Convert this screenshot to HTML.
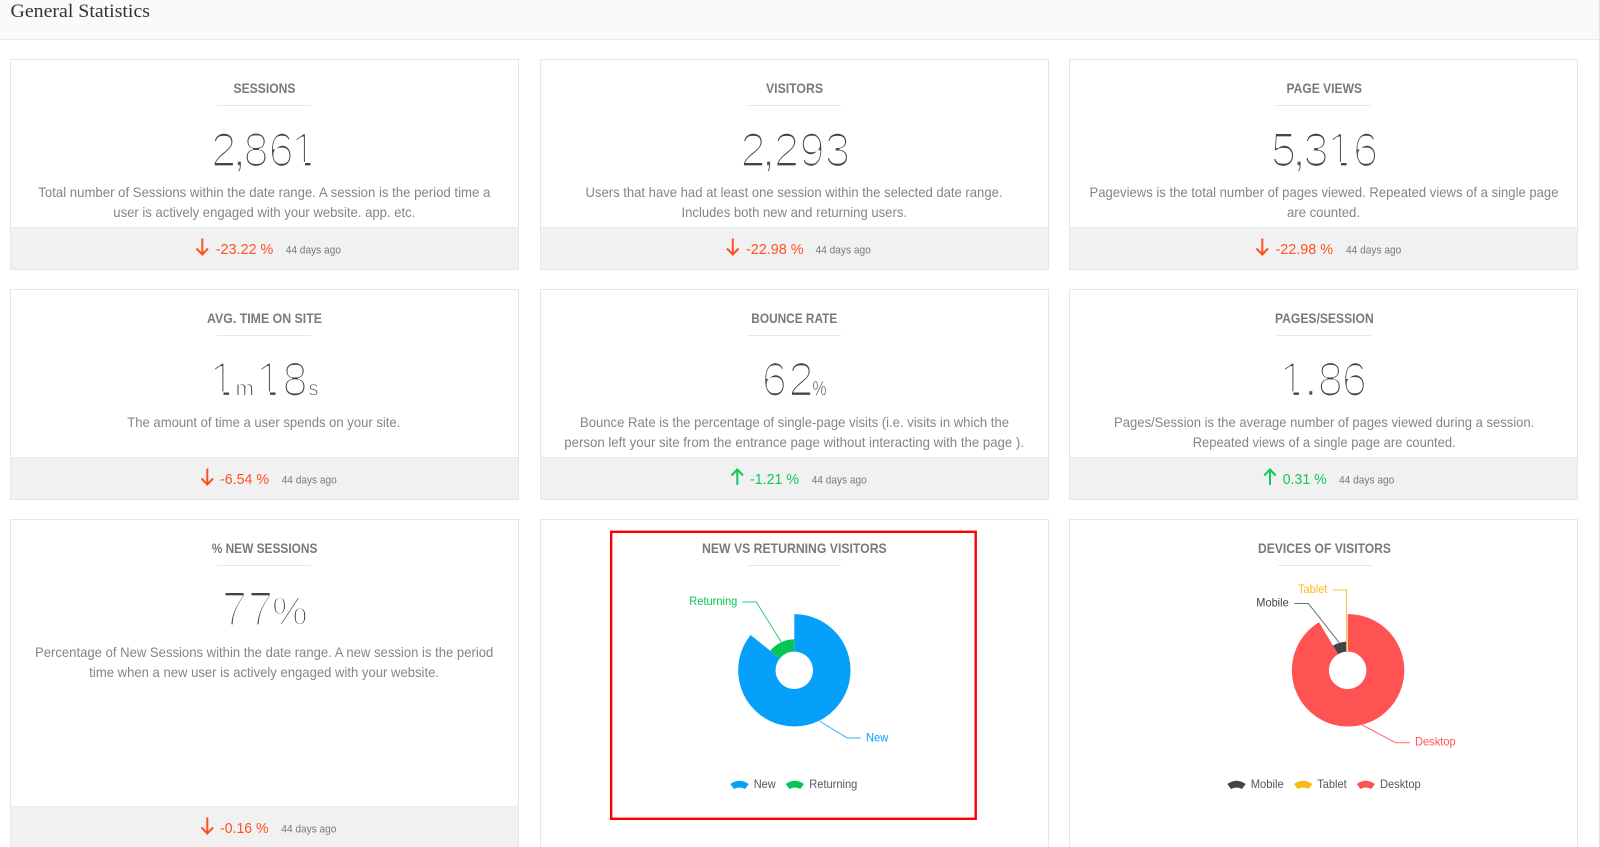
<!DOCTYPE html>
<html><head><meta charset="utf-8"><title>General Statistics</title>
<style>
html,body{margin:0;padding:0;background:#fff;width:1600px;height:847px;overflow:hidden}
svg{display:block;font-family:"Liberation Sans",sans-serif;filter:blur(.3px)}
.c{fill:#fff;stroke:#e6e6e6;stroke-width:1}
.b{fill:#f1f1f1}
.bl{stroke:#ebebeb;stroke-width:1}
.u{stroke:#e8e8e8;stroke-width:1}
.t{font-size:14px;font-weight:700;fill:#7a7a7a}
.d{font-size:14px;fill:#858585}
.n{font-size:47px;fill:#444;stroke:#fff;stroke-width:1.15px;paint-order:fill stroke;filter:url(#th)}
.p{font-size:40px;fill:#333;stroke:#fff;stroke-width:1.9px;paint-order:fill stroke}
.cm{font-size:47px;fill:#555;stroke:#fff;stroke-width:1.4px;paint-order:fill stroke}
.sm{font-size:21px;fill:#555;stroke:#fff;stroke-width:.8px;paint-order:fill stroke}
.r{font-size:15px;fill:#ff5126}
.g{font-size:15px;fill:#0fc95a}
.a{font-size:11px;fill:#7a7a7a}
.ar{fill:none;stroke:#ff5126;stroke-width:2}
.ag{fill:none;stroke:#0fc95a;stroke-width:2}
.l{font-size:12px}
.le{font-size:12px;fill:#555}
.w{fill:#fff}
.ln{fill:none;stroke-width:1;opacity:.85}
</style></head><body>
<svg width="1600" height="847" viewBox="0 0 1600 847" xmlns="http://www.w3.org/2000/svg">
<defs><filter id="th" x="-20%" y="-20%" width="140%" height="140%" color-interpolation-filters="sRGB"><feMorphology operator="dilate" radius="1 0"/></filter></defs>
<rect x="0" y="0" width="1600" height="847" fill="#fff"/>
<rect x="0" y="0" width="1600" height="39" fill="#f9fafa"/>
<rect x="0" y="39" width="1600" height="1" fill="#eaeaea"/>
<rect x="1599" y="0" width="1" height="847" fill="#e2e2e2"/>
<text x="10.5" y="17" font-family="Liberation Serif,serif" font-size="19" fill="#333" textLength="139.5" lengthAdjust="spacingAndGlyphs">General Statistics</text>

<!-- Row 1 -->
<rect class="c" x="10.5" y="59.5" width="508" height="210"/><rect class="b" x="11" y="227" width="507" height="42"/><line class="bl" x1="11" x2="518" y1="227.5" y2="227.5"/>
<rect class="c" x="540.5" y="59.5" width="508" height="210"/><rect class="b" x="541" y="227" width="507" height="42"/><line class="bl" x1="541" x2="1048" y1="227.5" y2="227.5"/>
<rect class="c" x="1069.5" y="59.5" width="508" height="210"/><rect class="b" x="1070" y="227" width="507" height="42"/><line class="bl" x1="1070" x2="1577" y1="227.5" y2="227.5"/>

<text class="t" x="233.5" y="93" textLength="62" lengthAdjust="spacingAndGlyphs">SESSIONS</text>
<line class="u" x1="217" x2="311" y1="105.5" y2="105.5"/>
<text class="n" y="166" x="210.7">2</text>
<text class="cm" x="232.7" y="166">,</text>
<text class="n" y="166" x="243 268 290.5">861</text>
<rect class="w" x="292.5" y="162" width="12.5" height="5"/><rect class="w" x="310.5" y="162" width="8" height="5"/>
<text class="d" x="38.3" y="197" textLength="452" lengthAdjust="spacingAndGlyphs">Total number of Sessions within the date range. A session is the period time a</text>
<text class="d" x="113.3" y="217" textLength="302" lengthAdjust="spacingAndGlyphs">user is actively engaged with your website. app. etc.</text>
<path class="ar" d="M202.3 238.5V254.5M196.5 248.5L202.3 254.5L208 248.5"/>
<text class="r" x="215.7" y="254" textLength="57.6" lengthAdjust="spacingAndGlyphs">-23.22 %</text>
<text class="a" x="285.7" y="253.5" textLength="55.3" lengthAdjust="spacingAndGlyphs">44 days ago</text>

<text class="t" x="766" y="93" textLength="57" lengthAdjust="spacingAndGlyphs">VISITORS</text>
<line class="u" x1="747" x2="841" y1="105.5" y2="105.5"/>
<text class="n" y="166" x="740">2</text>
<text class="cm" x="762" y="166">,</text>
<text class="n" y="166" x="773.5 799 824.5">293</text>
<text class="d" x="585.5" y="197" textLength="417" lengthAdjust="spacingAndGlyphs">Users that have had at least one session within the selected date range.</text>
<text class="d" x="681.5" y="217" textLength="225.5" lengthAdjust="spacingAndGlyphs">Includes both new and returning users.</text>
<path class="ar" d="M732.8 238.5V254.5M727 248.5L732.8 254.5L738.5 248.5"/>
<text class="r" x="746" y="254" textLength="57.6" lengthAdjust="spacingAndGlyphs">-22.98 %</text>
<text class="a" x="815.5" y="253.5" textLength="55.3" lengthAdjust="spacingAndGlyphs">44 days ago</text>

<text class="t" x="1286.5" y="93" textLength="75.5" lengthAdjust="spacingAndGlyphs">PAGE VIEWS</text>
<line class="u" x1="1276" x2="1371" y1="105.5" y2="105.5"/>
<text class="n" y="166" x="1270.5">5</text>
<text class="cm" x="1292.5" y="166">,</text>
<text class="n" y="166" x="1303 1326.5">31</text>
<rect class="w" x="1328.5" y="162" width="12.5" height="5"/><rect class="w" x="1346.5" y="162" width="7.5" height="5"/>
<text class="n" y="166" x="1352.5">6</text>
<text class="d" x="1089.5" y="197" textLength="469" lengthAdjust="spacingAndGlyphs">Pageviews is the total number of pages viewed. Repeated views of a single page</text>
<text class="d" x="1287" y="217" textLength="73" lengthAdjust="spacingAndGlyphs">are counted.</text>
<path class="ar" d="M1262.3 238.5V254.5M1256.5 248.5L1262.3 254.5L1268 248.5"/>
<text class="r" x="1275.5" y="254" textLength="57.6" lengthAdjust="spacingAndGlyphs">-22.98 %</text>
<text class="a" x="1346" y="253.5" textLength="55.3" lengthAdjust="spacingAndGlyphs">44 days ago</text>

<!-- Row 2 -->
<rect class="c" x="10.5" y="289.5" width="508" height="210"/><rect class="b" x="11" y="457" width="507" height="42"/><line class="bl" x1="11" x2="518" y1="457.5" y2="457.5"/>
<rect class="c" x="540.5" y="289.5" width="508" height="210"/><rect class="b" x="541" y="457" width="507" height="42"/><line class="bl" x1="541" x2="1048" y1="457.5" y2="457.5"/>
<rect class="c" x="1069.5" y="289.5" width="508" height="210"/><rect class="b" x="1070" y="457" width="507" height="42"/><line class="bl" x1="1070" x2="1577" y1="457.5" y2="457.5"/>

<text class="t" x="207" y="323" textLength="115" lengthAdjust="spacingAndGlyphs">AVG. TIME ON SITE</text>
<line class="u" x1="217" x2="311" y1="335.5" y2="335.5"/>
<text class="n" x="209" y="395.5">1</text>
<rect class="w" x="211" y="391.5" width="12.5" height="5"/><rect class="w" x="229" y="391.5" width="6.5" height="5"/>
<text class="sm" x="235.5" y="395.5" textLength="18.5" lengthAdjust="spacingAndGlyphs">m</text>
<text class="n" y="395.5" x="255.5">1</text>
<rect class="w" x="257.5" y="391.5" width="12.5" height="5"/><rect class="w" x="275.5" y="391.5" width="8" height="5"/>
<text class="n" y="395.5" x="282">8</text>
<text class="sm" x="308.5" y="395.5" textLength="10" lengthAdjust="spacingAndGlyphs">s</text>
<text class="d" x="127.3" y="427" textLength="273" lengthAdjust="spacingAndGlyphs">The amount of time a user spends on your site.</text>
<path class="ar" d="M207.3 468.5V484.5M201.5 478.5L207.3 484.5L213 478.5"/>
<text class="r" x="220" y="484" textLength="49" lengthAdjust="spacingAndGlyphs">-6.54 %</text>
<text class="a" x="281.7" y="483.5" textLength="55" lengthAdjust="spacingAndGlyphs">44 days ago</text>

<text class="t" x="751.3" y="323" textLength="86" lengthAdjust="spacingAndGlyphs">BOUNCE RATE</text>
<line class="u" x1="747" x2="841" y1="335.5" y2="335.5"/>
<text class="n" y="395.5" x="761.3 788">62</text>
<text class="sm" x="812.5" y="395.5" style="fill:#444;stroke-width:.5px" textLength="14" lengthAdjust="spacingAndGlyphs">%</text>
<text class="d" x="580" y="427" textLength="429" lengthAdjust="spacingAndGlyphs">Bounce Rate is the percentage of single-page visits (i.e. visits in which the</text>
<text class="d" x="564.3" y="447" textLength="459.7" lengthAdjust="spacingAndGlyphs">person left your site from the entrance page without interacting with the page ).</text>
<path class="ag" d="M737.3 485V469.5M731.5 475.5L737.3 469.5L743 475.5"/>
<text class="g" x="750" y="484" textLength="49" lengthAdjust="spacingAndGlyphs">-1.21 %</text>
<text class="a" x="811.7" y="483.5" textLength="55" lengthAdjust="spacingAndGlyphs">44 days ago</text>

<text class="t" x="1275" y="323" textLength="98.7" lengthAdjust="spacingAndGlyphs">PAGES/SESSION</text>
<line class="u" x1="1277" x2="1371" y1="335.5" y2="335.5"/>
<text class="n" y="395.5" x="1279">1</text>
<rect class="w" x="1281" y="391.5" width="12.5" height="5"/><rect class="w" x="1299" y="391.5" width="7" height="5"/>
<text class="cm" x="1304.2" y="395.5">.</text>
<text class="n" y="395.5" x="1317.3 1341.3">86</text>
<text class="d" x="1114" y="427" textLength="420.3" lengthAdjust="spacingAndGlyphs">Pages/Session is the average number of pages viewed during a session.</text>
<text class="d" x="1192.7" y="447" textLength="263" lengthAdjust="spacingAndGlyphs">Repeated views of a single page are counted.</text>
<path class="ag" d="M1270 485V469.5M1264.2 475.5L1270 469.5L1275.7 475.5"/>
<text class="g" x="1282.7" y="484" textLength="44" lengthAdjust="spacingAndGlyphs">0.31 %</text>
<text class="a" x="1339" y="483.5" textLength="55.3" lengthAdjust="spacingAndGlyphs">44 days ago</text>

<!-- Row 3 -->
<rect class="c" x="10.5" y="519.5" width="508" height="340"/><rect class="b" x="11" y="806" width="507" height="50"/><line class="bl" x1="11" x2="518" y1="806.5" y2="806.5"/>
<rect class="c" x="540.5" y="519.5" width="508" height="340"/>
<rect class="c" x="1069.5" y="519.5" width="508" height="340"/>

<text class="t" x="211.7" y="553" textLength="105.7" lengthAdjust="spacingAndGlyphs">% NEW SESSIONS</text>
<line class="u" x1="217" x2="311" y1="565.5" y2="565.5"/>
<text class="n" y="625" x="221.5 247.5">77</text>
<text class="p" y="625" x="272">%</text>
<text class="d" x="35" y="657" textLength="458.3" lengthAdjust="spacingAndGlyphs">Percentage of New Sessions within the date range. A new session is the period</text>
<text class="d" x="89.3" y="677" textLength="349.7" lengthAdjust="spacingAndGlyphs">time when a new user is actively engaged with your website.</text>
<path class="ar" d="M207.3 817.5V833.5M201.5 827.5L207.3 833.5L213 827.5"/>
<text class="r" x="220" y="833" textLength="48.6" lengthAdjust="spacingAndGlyphs">-0.16 %</text>
<text class="a" x="281.4" y="832.5" textLength="55" lengthAdjust="spacingAndGlyphs">44 days ago</text>

<!-- New vs returning -->
<rect x="611.2" y="531.8" width="364.5" height="287" fill="none" stroke="#f00" stroke-width="2.4"/>
<text class="t" x="702" y="553" textLength="184.7" lengthAdjust="spacingAndGlyphs">NEW VS RETURNING VISITORS</text>
<line class="u" x1="747" x2="841" y1="565.5" y2="565.5"/>
<path d="M794.3 614.1A56.2 56.2 0 1 1 750.6 635L779.8 658.5A18.7 18.7 0 1 0 794.3 651.6Z" fill="#06a0fb"/>
<path d="M794.3 651.6V639.3A31 31 0 0 0 770.2 650.8L779.8 658.5A18.7 18.7 0 0 1 794.3 651.6Z" fill="#05c655"/>
<path class="ln" d="M742.3 602H756.3L781 641.7" stroke="#05c655"/>
<path class="ln" d="M819.3 721L847.3 738H860.7" stroke="#06a0fb"/>
<text class="l" x="689.3" y="605" fill="#05c655" textLength="48" lengthAdjust="spacingAndGlyphs">Returning</text>
<text class="l" x="866" y="741.5" fill="#06a0fb" textLength="22.3" lengthAdjust="spacingAndGlyphs">New</text>
<path d="M730.3 784Q739.5 777.5 748.7 784L745 789Q739.5 786 734 789Z" fill="#06a0fb"/>
<text class="le" x="753.7" y="788" textLength="22" lengthAdjust="spacingAndGlyphs">New</text>
<path d="M785.7 784Q794.9 777.5 804 784L800.3 789Q794.9 786 789.4 789Z" fill="#05c655"/>
<text class="le" x="809.3" y="788" textLength="48" lengthAdjust="spacingAndGlyphs">Returning</text>

<!-- Devices -->
<text class="t" x="1258" y="553" textLength="133" lengthAdjust="spacingAndGlyphs">DEVICES OF VISITORS</text>
<line class="u" x1="1278" x2="1372" y1="565.5" y2="565.5"/>
<path d="M1347.7 614.1A56.2 56.2 0 1 1 1319 622.2L1338.1 654.2A18.7 18.7 0 1 0 1347.7 651.6Z" fill="#ff5252"/>
<path d="M1346.7 651.6V641.6A28.7 28.7 0 0 0 1333 645.6L1338.1 654.2A18.7 18.7 0 0 1 1346.7 651.6Z" fill="#444"/>
<path class="ln" d="M1294.3 603.5H1308.3L1339.3 642.7" stroke="#555"/>
<path class="ln" d="M1332.7 590H1346.5V651" stroke="#fdb913"/>
<path class="ln" d="M1362.3 725L1395.7 742.7H1410" stroke="#ff5252"/>
<text class="l" x="1256.3" y="606.5" fill="#444" textLength="32.4" lengthAdjust="spacingAndGlyphs">Mobile</text>
<text class="l" x="1298" y="593" fill="#fdb913" textLength="29.3" lengthAdjust="spacingAndGlyphs">Tablet</text>
<text class="l" x="1415" y="745.5" fill="#ff5252" textLength="40.7" lengthAdjust="spacingAndGlyphs">Desktop</text>
<path d="M1227.3 784Q1236.5 777.5 1245.7 784L1242 789Q1236.5 786 1231 789Z" fill="#444"/>
<text class="le" x="1250.7" y="788" textLength="33" lengthAdjust="spacingAndGlyphs">Mobile</text>
<path d="M1294 784Q1303.2 777.5 1312.3 784L1308.6 789Q1303.2 786 1297.7 789Z" fill="#fdb913"/>
<text class="le" x="1317.3" y="788" textLength="29.4" lengthAdjust="spacingAndGlyphs">Tablet</text>
<path d="M1356.7 784Q1365.9 777.5 1375 784L1371.3 789Q1365.9 786 1360.4 789Z" fill="#ff5252"/>
<text class="le" x="1380" y="788" textLength="40.7" lengthAdjust="spacingAndGlyphs">Desktop</text>
</svg>
</body></html>
